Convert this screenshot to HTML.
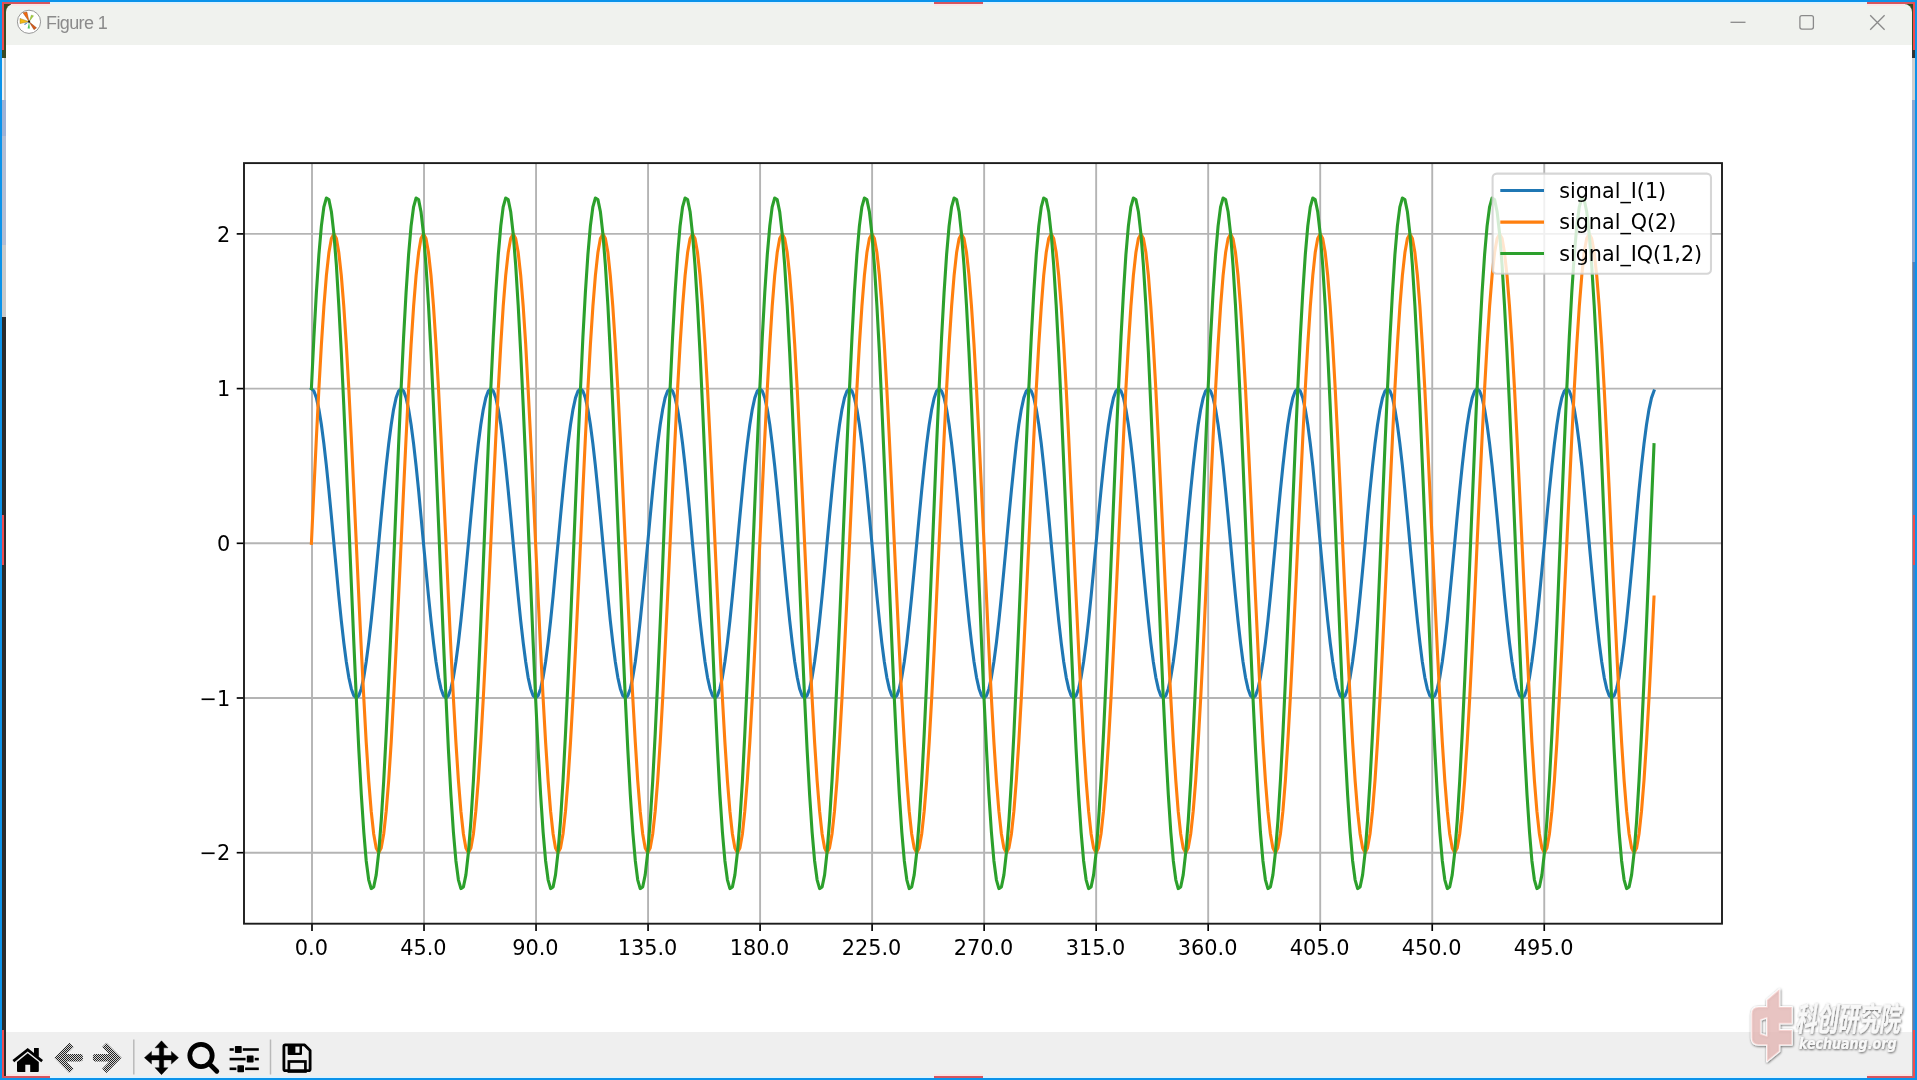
<!DOCTYPE html>
<html lang="en">
<head>
<meta charset="utf-8">
<title>Figure 1</title>
<style>
html,body{margin:0;padding:0;}
body{width:1917px;height:1080px;overflow:hidden;position:relative;background:#0b93ea;font-family:"Liberation Sans","Noto Sans CJK SC",sans-serif;}
.abs{position:absolute;}
#ring{left:2px;top:2px;width:1913px;height:1076px;background:#dff2fd;}
#win{left:6px;top:4px;width:1906px;height:1072px;background:#fff;}
#titlebar{left:6px;top:4px;width:1906px;height:41px;background:#f0f2ee;border-radius:8px 8px 0 0;}
#title{left:46px;top:13px;will-change:transform;font-size:18px;line-height:21px;color:#8b8b8b;letter-spacing:-0.62px;white-space:nowrap;}
#toolbar{left:6px;top:1032px;width:1906px;height:44px;background:#efefef;}
.red{background:#d6555f;}
</style>
</head>
<body>
<div id="ring" class="abs"></div>
<!-- left strip -->
<div class="abs" style="left:2px;top:4px;width:4px;height:1072px;background:#2b2b2b"></div>
<div class="abs" style="left:2px;top:4px;width:10px;height:54px;background:#3b4a22"></div>
<div class="abs" style="left:2px;top:58px;width:2px;height:42px;background:#f2f2f2"></div>
<div class="abs" style="left:4px;top:58px;width:2px;height:42px;background:#c4c4c4"></div>
<div class="abs" style="left:2px;top:100px;width:4px;height:36px;background:#9fb2d6"></div>
<div class="abs" style="left:2px;top:136px;width:4px;height:109px;background:#b3bdd3"></div>
<div class="abs" style="left:2px;top:245px;width:4px;height:72px;background:#cacaca"></div>
<!-- right strip -->
<div class="abs" style="left:1912px;top:4px;width:3px;height:1072px;background:#4c7fc4"></div>
<div class="abs" style="left:1912px;top:4px;width:1px;height:1072px;background:#8f959c"></div>
<div class="abs" style="left:1902px;top:4px;width:13px;height:52px;background:#3b4a22"></div>
<div class="abs" style="left:1912px;top:50px;width:3px;height:8px;background:#333"></div>
<div class="abs" style="left:1912px;top:58px;width:3px;height:42px;background:#cfcfcf"></div>
<div class="abs" style="left:1912px;top:100px;width:3px;height:162px;background:#8fa6cf"></div>
<!-- window -->
<div id="win" class="abs" style="top:44px;height:1032px"></div>
<div id="titlebar" class="abs"></div>
<!-- red snip marks -->
<div class="abs red" style="left:2px;top:2px;width:48px;height:2px"></div>
<div class="abs red" style="left:2px;top:2px;width:2px;height:48px;background:#f04a50"></div>
<div class="abs" style="left:11px;top:4px;width:39px;height:2px;background:#fbe6e5"></div>
<div class="abs red" style="left:934px;top:2px;width:49px;height:2px"></div>
<div class="abs" style="left:934px;top:4px;width:49px;height:2px;background:#fbe6e5"></div>
<div class="abs" style="left:1867px;top:4px;width:38px;height:2px;background:#fbe6e5"></div>
<div class="abs red" style="left:1867px;top:2px;width:48px;height:2px"></div>
<div class="abs red" style="left:1913px;top:2px;width:2px;height:48px;background:#f04a50"></div>
<div class="abs red" style="left:2px;top:515px;width:2px;height:50px;background:#f04a50"></div>
<div class="abs red" style="left:1913px;top:515px;width:2px;height:50px;background:#f04a50"></div>
<div class="abs red" style="left:2px;top:1030px;width:2px;height:48px;background:#f04a50"></div>
<div class="abs red" style="left:2px;top:1076px;width:48px;height:2px"></div>
<div class="abs red" style="left:934px;top:1076px;width:49px;height:2px"></div>
<div class="abs red" style="left:1913px;top:1030px;width:2px;height:48px;background:#f04a50"></div>
<div class="abs red" style="left:1867px;top:1076px;width:48px;height:2px"></div>

<div class="abs" style="left:6px;top:1074px;width:44px;height:2px;background:#fbe3e3;z-index:5"></div>
<div class="abs" style="left:934px;top:1074px;width:49px;height:2px;background:#fbe3e3;z-index:5"></div>
<div class="abs" style="left:1867px;top:1074px;width:45px;height:2px;background:#fbe3e3;z-index:5"></div>
<!-- title bar contents -->
<svg class="abs" style="left:14px;top:7px" width="30" height="30" viewBox="14 7 30 30">
<circle cx="29" cy="21.8" r="11.6" fill="#fff" stroke="#8c8c8c" stroke-width="0.9"/>
<polygon points="29.1,21.7 23,12.8 26.9,12" fill="#f4690f" stroke="#7a3a10" stroke-width="0.4"/>
<polygon points="29.1,21.7 20,18.4 20,23.6" fill="#f5b916" stroke="#8a6a10" stroke-width="0.4"/>
<polygon points="29.1,21.7 31.4,15 33.6,15.8" fill="#a6d23c" stroke="#6a8a30" stroke-width="0.3"/>
<polygon points="29.1,21.7 34,29.7 36.5,27.8" fill="#d9591b" stroke="#7a3a10" stroke-width="0.4"/>
<polygon points="29.1,21.7 27.6,28.4 29.9,28.4" fill="#4dc65c"/>
<polygon points="29.1,21.7 24.2,24 24.8,25" fill="#2a72b8"/>
<circle cx="29.1" cy="21.7" r="1.1" fill="#222"/>
</svg>
<div id="title" class="abs">Figure 1</div>
<svg class="abs" style="left:1720px;top:4px" width="192" height="40" viewBox="1720 4 192 40" fill="none" stroke="#8a8a8a" stroke-width="1.3">
<line x1="1730.5" y1="22.3" x2="1745.5" y2="22.3"/>
<rect x="1799.9" y="15.6" width="13.5" height="13.5" rx="2" ry="2"/>
<path d="M1870.2 15.3 L1884.6 29.7 M1884.6 15.3 L1870.2 29.7"/>
</svg>

<svg id="plot" width="1906" height="987" viewBox="6 45 1906 987" style="position:absolute;left:6px;top:45px;will-change:transform">
<rect x="6" y="45" width="1906" height="987" fill="#fff"/>
<g stroke="#b4b4b4" stroke-width="1.9"><line x1="312.00" y1="163.1" x2="312.00" y2="923.7"/><line x1="424.02" y1="163.1" x2="424.02" y2="923.7"/><line x1="536.05" y1="163.1" x2="536.05" y2="923.7"/><line x1="648.07" y1="163.1" x2="648.07" y2="923.7"/><line x1="760.09" y1="163.1" x2="760.09" y2="923.7"/><line x1="872.11" y1="163.1" x2="872.11" y2="923.7"/><line x1="984.14" y1="163.1" x2="984.14" y2="923.7"/><line x1="1096.16" y1="163.1" x2="1096.16" y2="923.7"/><line x1="1208.18" y1="163.1" x2="1208.18" y2="923.7"/><line x1="1320.20" y1="163.1" x2="1320.20" y2="923.7"/><line x1="1432.23" y1="163.1" x2="1432.23" y2="923.7"/><line x1="1544.25" y1="163.1" x2="1544.25" y2="923.7"/><line x1="244.0" y1="852.70" x2="1722.0" y2="852.70"/><line x1="244.0" y1="698.00" x2="1722.0" y2="698.00"/><line x1="244.0" y1="543.30" x2="1722.0" y2="543.30"/><line x1="244.0" y1="388.60" x2="1722.0" y2="388.60"/><line x1="244.0" y1="233.90" x2="1722.0" y2="233.90"/></g>
<polyline points="311.4,388.6 313.9,391.0 316.4,397.9 318.9,409.3 321.4,424.8 323.9,443.9 326.4,465.9 328.9,490.4 331.4,516.4 333.9,543.3 336.4,570.2 338.8,596.2 341.3,620.6 343.8,642.7 346.3,661.8 348.8,677.3 351.3,688.7 353.8,695.6 356.3,698.0 358.8,695.6 361.3,688.7 363.8,677.3 366.2,661.8 368.7,642.7 371.2,620.6 373.7,596.2 376.2,570.2 378.7,543.3 381.2,516.4 383.7,490.4 386.2,465.9 388.7,443.9 391.2,424.8 393.6,409.3 396.1,397.9 398.6,391.0 401.1,388.6 403.6,391.0 406.1,397.9 408.6,409.3 411.1,424.8 413.6,443.9 416.1,465.9 418.6,490.4 421.0,516.4 423.5,543.3 426.0,570.2 428.5,596.2 431.0,620.6 433.5,642.7 436.0,661.8 438.5,677.3 441.0,688.7 443.5,695.6 446.0,698.0 448.4,695.6 450.9,688.7 453.4,677.3 455.9,661.8 458.4,642.7 460.9,620.6 463.4,596.2 465.9,570.2 468.4,543.3 470.9,516.4 473.4,490.4 475.8,466.0 478.3,443.9 480.8,424.8 483.3,409.3 485.8,397.9 488.3,391.0 490.8,388.6 493.3,391.0 495.8,397.9 498.3,409.3 500.8,424.8 503.2,443.9 505.7,465.9 508.2,490.4 510.7,516.4 513.2,543.3 515.7,570.2 518.2,596.2 520.7,620.6 523.2,642.7 525.7,661.8 528.1,677.3 530.6,688.7 533.1,695.6 535.6,698.0 538.1,695.6 540.6,688.7 543.1,677.3 545.6,661.8 548.1,642.7 550.6,620.7 553.1,596.2 555.5,570.2 558.0,543.3 560.5,516.4 563.0,490.4 565.5,465.9 568.0,443.9 570.5,424.8 573.0,409.3 575.5,397.9 578.0,391.0 580.5,388.6 582.9,391.0 585.4,397.9 587.9,409.3 590.4,424.8 592.9,443.9 595.4,465.9 597.9,490.4 600.4,516.4 602.9,543.3 605.4,570.2 607.9,596.2 610.3,620.6 612.8,642.7 615.3,661.8 617.8,677.3 620.3,688.7 622.8,695.6 625.3,698.0 627.8,695.6 630.3,688.7 632.8,677.3 635.3,661.8 637.7,642.7 640.2,620.7 642.7,596.2 645.2,570.2 647.7,543.3 650.2,516.4 652.7,490.4 655.2,465.9 657.7,443.9 660.2,424.8 662.7,409.3 665.1,397.9 667.6,391.0 670.1,388.6 672.6,391.0 675.1,397.9 677.6,409.3 680.1,424.8 682.6,443.9 685.1,465.9 687.6,490.4 690.1,516.4 692.5,543.3 695.0,570.2 697.5,596.2 700.0,620.6 702.5,642.7 705.0,661.8 707.5,677.3 710.0,688.7 712.5,695.6 715.0,698.0 717.5,695.6 719.9,688.7 722.4,677.3 724.9,661.8 727.4,642.7 729.9,620.7 732.4,596.2 734.9,570.2 737.4,543.3 739.9,516.4 742.4,490.4 744.8,465.9 747.3,443.9 749.8,424.8 752.3,409.3 754.8,397.9 757.3,391.0 759.8,388.6 762.3,391.0 764.8,397.9 767.3,409.3 769.8,424.8 772.2,443.9 774.7,465.9 777.2,490.4 779.7,516.4 782.2,543.3 784.7,570.2 787.2,596.2 789.7,620.6 792.2,642.7 794.7,661.8 797.2,677.3 799.6,688.7 802.1,695.6 804.6,698.0 807.1,695.6 809.6,688.7 812.1,677.3 814.6,661.8 817.1,642.7 819.6,620.6 822.1,596.2 824.6,570.2 827.0,543.3 829.5,516.4 832.0,490.4 834.5,465.9 837.0,443.9 839.5,424.8 842.0,409.3 844.5,397.9 847.0,391.0 849.5,388.6 852.0,391.0 854.4,397.9 856.9,409.3 859.4,424.8 861.9,443.9 864.4,465.9 866.9,490.4 869.4,516.4 871.9,543.3 874.4,570.2 876.9,596.2 879.4,620.6 881.8,642.7 884.3,661.8 886.8,677.3 889.3,688.7 891.8,695.6 894.3,698.0 896.8,695.6 899.3,688.7 901.8,677.3 904.3,661.8 906.8,642.7 909.2,620.6 911.7,596.2 914.2,570.2 916.7,543.3 919.2,516.4 921.7,490.4 924.2,466.0 926.7,443.9 929.2,424.8 931.7,409.3 934.2,397.9 936.6,391.0 939.1,388.6 941.6,391.0 944.1,397.9 946.6,409.3 949.1,424.8 951.6,443.9 954.1,465.9 956.6,490.4 959.1,516.4 961.5,543.3 964.0,570.2 966.5,596.2 969.0,620.6 971.5,642.7 974.0,661.8 976.5,677.3 979.0,688.7 981.5,695.6 984.0,698.0 986.5,695.6 988.9,688.7 991.4,677.3 993.9,661.8 996.4,642.7 998.9,620.6 1001.4,596.2 1003.9,570.2 1006.4,543.3 1008.9,516.4 1011.4,490.4 1013.9,466.0 1016.3,443.9 1018.8,424.8 1021.3,409.3 1023.8,397.9 1026.3,391.0 1028.8,388.6 1031.3,391.0 1033.8,397.9 1036.3,409.3 1038.8,424.8 1041.3,443.9 1043.7,465.9 1046.2,490.4 1048.7,516.4 1051.2,543.3 1053.7,570.2 1056.2,596.2 1058.7,620.6 1061.2,642.7 1063.7,661.8 1066.2,677.3 1068.7,688.7 1071.1,695.6 1073.6,698.0 1076.1,695.6 1078.6,688.7 1081.1,677.3 1083.6,661.8 1086.1,642.7 1088.6,620.6 1091.1,596.2 1093.6,570.2 1096.1,543.3 1098.5,516.4 1101.0,490.4 1103.5,466.0 1106.0,443.9 1108.5,424.8 1111.0,409.3 1113.5,397.9 1116.0,391.0 1118.5,388.6 1121.0,391.0 1123.5,397.9 1125.9,409.3 1128.4,424.8 1130.9,443.9 1133.4,465.9 1135.9,490.4 1138.4,516.4 1140.9,543.3 1143.4,570.2 1145.9,596.2 1148.4,620.6 1150.8,642.7 1153.3,661.8 1155.8,677.3 1158.3,688.7 1160.8,695.6 1163.3,698.0 1165.8,695.6 1168.3,688.7 1170.8,677.3 1173.3,661.8 1175.8,642.7 1178.2,620.6 1180.7,596.2 1183.2,570.2 1185.7,543.3 1188.2,516.4 1190.7,490.4 1193.2,466.0 1195.7,443.9 1198.2,424.8 1200.7,409.3 1203.2,397.9 1205.6,391.0 1208.1,388.6 1210.6,391.0 1213.1,397.9 1215.6,409.3 1218.1,424.8 1220.6,443.9 1223.1,465.9 1225.6,490.4 1228.1,516.4 1230.6,543.3 1233.0,570.2 1235.5,596.2 1238.0,620.6 1240.5,642.7 1243.0,661.8 1245.5,677.3 1248.0,688.7 1250.5,695.6 1253.0,698.0 1255.5,695.6 1258.0,688.7 1260.4,677.3 1262.9,661.8 1265.4,642.7 1267.9,620.7 1270.4,596.2 1272.9,570.2 1275.4,543.3 1277.9,516.4 1280.4,490.4 1282.9,466.0 1285.4,443.9 1287.8,424.8 1290.3,409.3 1292.8,397.9 1295.3,391.0 1297.8,388.6 1300.3,391.0 1302.8,397.9 1305.3,409.3 1307.8,424.8 1310.3,443.9 1312.8,465.9 1315.2,490.4 1317.7,516.4 1320.2,543.3 1322.7,570.2 1325.2,596.2 1327.7,620.7 1330.2,642.7 1332.7,661.8 1335.2,677.3 1337.7,688.7 1340.2,695.6 1342.6,698.0 1345.1,695.6 1347.6,688.7 1350.1,677.3 1352.6,661.8 1355.1,642.7 1357.6,620.6 1360.1,596.2 1362.6,570.2 1365.1,543.3 1367.5,516.4 1370.0,490.4 1372.5,466.0 1375.0,443.9 1377.5,424.8 1380.0,409.3 1382.5,397.9 1385.0,391.0 1387.5,388.6 1390.0,391.0 1392.5,397.9 1394.9,409.3 1397.4,424.8 1399.9,443.9 1402.4,465.9 1404.9,490.4 1407.4,516.4 1409.9,543.3 1412.4,570.2 1414.9,596.2 1417.4,620.6 1419.9,642.7 1422.3,661.8 1424.8,677.3 1427.3,688.7 1429.8,695.6 1432.3,698.0 1434.8,695.6 1437.3,688.7 1439.8,677.3 1442.3,661.8 1444.8,642.7 1447.3,620.7 1449.7,596.2 1452.2,570.2 1454.7,543.3 1457.2,516.4 1459.7,490.4 1462.2,466.0 1464.7,443.9 1467.2,424.8 1469.7,409.3 1472.2,397.9 1474.7,391.0 1477.1,388.6 1479.6,391.0 1482.1,397.9 1484.6,409.3 1487.1,424.8 1489.6,443.9 1492.1,465.9 1494.6,490.4 1497.1,516.4 1499.6,543.3 1502.1,570.2 1504.5,596.2 1507.0,620.7 1509.5,642.7 1512.0,661.8 1514.5,677.3 1517.0,688.7 1519.5,695.6 1522.0,698.0 1524.5,695.6 1527.0,688.7 1529.5,677.3 1531.9,661.8 1534.4,642.7 1536.9,620.7 1539.4,596.2 1541.9,570.2 1544.4,543.3 1546.9,516.4 1549.4,490.4 1551.9,466.0 1554.4,443.9 1556.9,424.8 1559.3,409.3 1561.8,397.9 1564.3,391.0 1566.8,388.6 1569.3,391.0 1571.8,397.9 1574.3,409.3 1576.8,424.8 1579.3,443.9 1581.8,465.9 1584.2,490.4 1586.7,516.4 1589.2,543.3 1591.7,570.2 1594.2,596.2 1596.7,620.6 1599.2,642.7 1601.7,661.8 1604.2,677.3 1606.7,688.7 1609.2,695.6 1611.6,698.0 1614.1,695.6 1616.6,688.7 1619.1,677.3 1621.6,661.8 1624.1,642.7 1626.6,620.7 1629.1,596.2 1631.6,570.2 1634.1,543.3 1636.6,516.4 1639.0,490.4 1641.5,466.0 1644.0,443.9 1646.5,424.8 1649.0,409.3 1651.5,397.9 1654.0,391.0" fill="none" stroke="#1f77b4" stroke-width="3.1" stroke-linejoin="round" stroke-linecap="square"/>
<polyline points="311.4,543.3 313.9,489.6 316.4,437.5 318.9,388.6 321.4,344.4 323.9,306.3 326.4,275.4 328.9,252.6 331.4,238.6 333.9,233.9 336.4,238.6 338.8,252.6 341.3,275.4 343.8,306.3 346.3,344.4 348.8,388.6 351.3,437.5 353.8,489.6 356.3,543.3 358.8,597.0 361.3,649.1 363.8,698.0 366.2,742.2 368.7,780.3 371.2,811.2 373.7,834.0 376.2,848.0 378.7,852.7 381.2,848.0 383.7,834.0 386.2,811.2 388.7,780.3 391.2,742.2 393.6,698.0 396.1,649.1 398.6,597.0 401.1,543.3 403.6,489.6 406.1,437.5 408.6,388.6 411.1,344.4 413.6,306.3 416.1,275.4 418.6,252.6 421.0,238.6 423.5,233.9 426.0,238.6 428.5,252.6 431.0,275.4 433.5,306.3 436.0,344.4 438.5,388.6 441.0,437.5 443.5,489.6 446.0,543.3 448.4,597.0 450.9,649.1 453.4,698.0 455.9,742.2 458.4,780.3 460.9,811.2 463.4,834.0 465.9,848.0 468.4,852.7 470.9,848.0 473.4,834.0 475.8,811.2 478.3,780.3 480.8,742.2 483.3,698.0 485.8,649.1 488.3,597.0 490.8,543.3 493.3,489.6 495.8,437.5 498.3,388.6 500.8,344.4 503.2,306.3 505.7,275.4 508.2,252.6 510.7,238.6 513.2,233.9 515.7,238.6 518.2,252.6 520.7,275.4 523.2,306.3 525.7,344.4 528.1,388.6 530.6,437.5 533.1,489.6 535.6,543.3 538.1,597.0 540.6,649.1 543.1,698.0 545.6,742.2 548.1,780.3 550.6,811.2 553.1,834.0 555.5,848.0 558.0,852.7 560.5,848.0 563.0,834.0 565.5,811.2 568.0,780.3 570.5,742.2 573.0,698.0 575.5,649.1 578.0,597.0 580.5,543.3 582.9,489.6 585.4,437.5 587.9,388.6 590.4,344.4 592.9,306.3 595.4,275.4 597.9,252.6 600.4,238.6 602.9,233.9 605.4,238.6 607.9,252.6 610.3,275.4 612.8,306.3 615.3,344.4 617.8,388.6 620.3,437.5 622.8,489.6 625.3,543.3 627.8,597.0 630.3,649.1 632.8,698.0 635.3,742.2 637.7,780.3 640.2,811.2 642.7,834.0 645.2,848.0 647.7,852.7 650.2,848.0 652.7,834.0 655.2,811.2 657.7,780.3 660.2,742.2 662.7,698.0 665.1,649.1 667.6,597.0 670.1,543.3 672.6,489.6 675.1,437.5 677.6,388.6 680.1,344.4 682.6,306.3 685.1,275.4 687.6,252.6 690.1,238.6 692.5,233.9 695.0,238.6 697.5,252.6 700.0,275.4 702.5,306.3 705.0,344.4 707.5,388.6 710.0,437.5 712.5,489.6 715.0,543.3 717.5,597.0 719.9,649.1 722.4,698.0 724.9,742.2 727.4,780.3 729.9,811.2 732.4,834.0 734.9,848.0 737.4,852.7 739.9,848.0 742.4,834.0 744.8,811.2 747.3,780.3 749.8,742.2 752.3,698.0 754.8,649.1 757.3,597.0 759.8,543.3 762.3,489.6 764.8,437.5 767.3,388.6 769.8,344.4 772.2,306.3 774.7,275.4 777.2,252.6 779.7,238.6 782.2,233.9 784.7,238.6 787.2,252.6 789.7,275.4 792.2,306.3 794.7,344.4 797.2,388.6 799.6,437.5 802.1,489.6 804.6,543.3 807.1,597.0 809.6,649.1 812.1,698.0 814.6,742.2 817.1,780.3 819.6,811.2 822.1,834.0 824.6,848.0 827.0,852.7 829.5,848.0 832.0,834.0 834.5,811.2 837.0,780.3 839.5,742.2 842.0,698.0 844.5,649.1 847.0,597.0 849.5,543.3 852.0,489.6 854.4,437.5 856.9,388.6 859.4,344.4 861.9,306.3 864.4,275.4 866.9,252.6 869.4,238.6 871.9,233.9 874.4,238.6 876.9,252.6 879.4,275.4 881.8,306.3 884.3,344.4 886.8,388.6 889.3,437.5 891.8,489.6 894.3,543.3 896.8,597.0 899.3,649.1 901.8,698.0 904.3,742.2 906.8,780.3 909.2,811.2 911.7,834.0 914.2,848.0 916.7,852.7 919.2,848.0 921.7,834.0 924.2,811.2 926.7,780.3 929.2,742.2 931.7,698.0 934.2,649.1 936.6,597.0 939.1,543.3 941.6,489.6 944.1,437.5 946.6,388.6 949.1,344.4 951.6,306.3 954.1,275.4 956.6,252.6 959.1,238.6 961.5,233.9 964.0,238.6 966.5,252.6 969.0,275.4 971.5,306.3 974.0,344.4 976.5,388.6 979.0,437.5 981.5,489.6 984.0,543.3 986.5,597.0 988.9,649.1 991.4,698.0 993.9,742.2 996.4,780.3 998.9,811.2 1001.4,834.0 1003.9,848.0 1006.4,852.7 1008.9,848.0 1011.4,834.0 1013.9,811.2 1016.3,780.3 1018.8,742.2 1021.3,698.0 1023.8,649.1 1026.3,597.0 1028.8,543.3 1031.3,489.6 1033.8,437.5 1036.3,388.6 1038.8,344.4 1041.3,306.3 1043.7,275.4 1046.2,252.6 1048.7,238.6 1051.2,233.9 1053.7,238.6 1056.2,252.6 1058.7,275.4 1061.2,306.3 1063.7,344.4 1066.2,388.6 1068.7,437.5 1071.1,489.6 1073.6,543.3 1076.1,597.0 1078.6,649.1 1081.1,698.0 1083.6,742.2 1086.1,780.3 1088.6,811.2 1091.1,834.0 1093.6,848.0 1096.1,852.7 1098.5,848.0 1101.0,834.0 1103.5,811.2 1106.0,780.3 1108.5,742.2 1111.0,698.0 1113.5,649.1 1116.0,597.0 1118.5,543.3 1121.0,489.6 1123.5,437.5 1125.9,388.6 1128.4,344.4 1130.9,306.3 1133.4,275.4 1135.9,252.6 1138.4,238.6 1140.9,233.9 1143.4,238.6 1145.9,252.6 1148.4,275.4 1150.8,306.3 1153.3,344.4 1155.8,388.6 1158.3,437.5 1160.8,489.6 1163.3,543.3 1165.8,597.0 1168.3,649.1 1170.8,698.0 1173.3,742.2 1175.8,780.3 1178.2,811.2 1180.7,834.0 1183.2,848.0 1185.7,852.7 1188.2,848.0 1190.7,834.0 1193.2,811.2 1195.7,780.3 1198.2,742.2 1200.7,698.0 1203.2,649.1 1205.6,597.0 1208.1,543.3 1210.6,489.6 1213.1,437.5 1215.6,388.6 1218.1,344.4 1220.6,306.3 1223.1,275.4 1225.6,252.6 1228.1,238.6 1230.6,233.9 1233.0,238.6 1235.5,252.6 1238.0,275.4 1240.5,306.3 1243.0,344.4 1245.5,388.6 1248.0,437.5 1250.5,489.6 1253.0,543.3 1255.5,597.0 1258.0,649.1 1260.4,698.0 1262.9,742.2 1265.4,780.3 1267.9,811.2 1270.4,834.0 1272.9,848.0 1275.4,852.7 1277.9,848.0 1280.4,834.0 1282.9,811.2 1285.4,780.3 1287.8,742.2 1290.3,698.0 1292.8,649.1 1295.3,597.0 1297.8,543.3 1300.3,489.6 1302.8,437.5 1305.3,388.6 1307.8,344.4 1310.3,306.3 1312.8,275.4 1315.2,252.6 1317.7,238.6 1320.2,233.9 1322.7,238.6 1325.2,252.6 1327.7,275.4 1330.2,306.3 1332.7,344.4 1335.2,388.6 1337.7,437.5 1340.2,489.6 1342.6,543.3 1345.1,597.0 1347.6,649.1 1350.1,698.0 1352.6,742.2 1355.1,780.3 1357.6,811.2 1360.1,834.0 1362.6,848.0 1365.1,852.7 1367.5,848.0 1370.0,834.0 1372.5,811.2 1375.0,780.3 1377.5,742.2 1380.0,698.0 1382.5,649.1 1385.0,597.0 1387.5,543.3 1390.0,489.6 1392.5,437.5 1394.9,388.6 1397.4,344.4 1399.9,306.3 1402.4,275.4 1404.9,252.6 1407.4,238.6 1409.9,233.9 1412.4,238.6 1414.9,252.6 1417.4,275.4 1419.9,306.3 1422.3,344.4 1424.8,388.6 1427.3,437.5 1429.8,489.6 1432.3,543.3 1434.8,597.0 1437.3,649.1 1439.8,698.0 1442.3,742.2 1444.8,780.3 1447.3,811.2 1449.7,834.0 1452.2,848.0 1454.7,852.7 1457.2,848.0 1459.7,834.0 1462.2,811.2 1464.7,780.3 1467.2,742.2 1469.7,698.0 1472.2,649.1 1474.7,597.0 1477.1,543.3 1479.6,489.6 1482.1,437.5 1484.6,388.6 1487.1,344.4 1489.6,306.3 1492.1,275.4 1494.6,252.6 1497.1,238.6 1499.6,233.9 1502.1,238.6 1504.5,252.6 1507.0,275.4 1509.5,306.3 1512.0,344.4 1514.5,388.6 1517.0,437.5 1519.5,489.6 1522.0,543.3 1524.5,597.0 1527.0,649.1 1529.5,698.0 1531.9,742.2 1534.4,780.3 1536.9,811.2 1539.4,834.0 1541.9,848.0 1544.4,852.7 1546.9,848.0 1549.4,834.0 1551.9,811.2 1554.4,780.3 1556.9,742.2 1559.3,698.0 1561.8,649.1 1564.3,597.0 1566.8,543.3 1569.3,489.6 1571.8,437.5 1574.3,388.6 1576.8,344.4 1579.3,306.3 1581.8,275.4 1584.2,252.6 1586.7,238.6 1589.2,233.9 1591.7,238.6 1594.2,252.6 1596.7,275.4 1599.2,306.3 1601.7,344.4 1604.2,388.6 1606.7,437.5 1609.2,489.6 1611.6,543.3 1614.1,597.0 1616.6,649.1 1619.1,698.0 1621.6,742.2 1624.1,780.3 1626.6,811.2 1629.1,834.0 1631.6,848.0 1634.1,852.7 1636.6,848.0 1639.0,834.0 1641.5,811.2 1644.0,780.3 1646.5,742.2 1649.0,698.0 1651.5,649.1 1654.0,597.0" fill="none" stroke="#ff7f0e" stroke-width="3.1" stroke-linejoin="round" stroke-linecap="square"/>
<polyline points="311.4,388.6 313.9,337.2 316.4,292.1 318.9,254.6 321.4,225.9 323.9,206.8 326.4,198.0 328.9,199.6 331.4,211.7 333.9,233.9 336.4,265.5 338.8,305.5 341.3,352.7 343.8,405.7 346.3,462.9 348.8,522.6 351.3,582.8 353.8,641.9 356.3,698.0 358.8,749.4 361.3,794.5 363.8,832.0 366.2,860.7 368.7,879.8 371.2,888.6 373.7,887.0 376.2,874.9 378.7,852.7 381.2,821.1 383.7,781.1 386.2,733.9 388.7,680.9 391.2,623.7 393.6,564.0 396.1,503.8 398.6,444.7 401.1,388.6 403.6,337.2 406.1,292.1 408.6,254.6 411.1,225.9 413.6,206.8 416.1,198.0 418.6,199.6 421.0,211.7 423.5,233.9 426.0,265.5 428.5,305.5 431.0,352.7 433.5,405.7 436.0,462.9 438.5,522.6 441.0,582.8 443.5,641.9 446.0,698.0 448.4,749.4 450.9,794.5 453.4,832.0 455.9,860.7 458.4,879.8 460.9,888.6 463.4,887.0 465.9,874.9 468.4,852.7 470.9,821.1 473.4,781.1 475.8,733.9 478.3,680.9 480.8,623.7 483.3,564.0 485.8,503.8 488.3,444.7 490.8,388.6 493.3,337.2 495.8,292.1 498.3,254.6 500.8,225.9 503.2,206.8 505.7,198.0 508.2,199.6 510.7,211.7 513.2,233.9 515.7,265.5 518.2,305.5 520.7,352.7 523.2,405.7 525.7,462.9 528.1,522.6 530.6,582.8 533.1,641.9 535.6,698.0 538.1,749.4 540.6,794.5 543.1,832.0 545.6,860.7 548.1,879.8 550.6,888.6 553.1,887.0 555.5,874.9 558.0,852.7 560.5,821.1 563.0,781.1 565.5,733.9 568.0,680.9 570.5,623.7 573.0,564.0 575.5,503.8 578.0,444.7 580.5,388.6 582.9,337.2 585.4,292.1 587.9,254.6 590.4,225.9 592.9,206.8 595.4,198.0 597.9,199.6 600.4,211.7 602.9,233.9 605.4,265.5 607.9,305.5 610.3,352.7 612.8,405.7 615.3,462.9 617.8,522.6 620.3,582.8 622.8,641.9 625.3,698.0 627.8,749.4 630.3,794.5 632.8,832.0 635.3,860.7 637.7,879.8 640.2,888.6 642.7,887.0 645.2,874.9 647.7,852.7 650.2,821.1 652.7,781.1 655.2,733.9 657.7,680.9 660.2,623.7 662.7,564.0 665.1,503.8 667.6,444.7 670.1,388.6 672.6,337.2 675.1,292.1 677.6,254.6 680.1,225.9 682.6,206.8 685.1,198.0 687.6,199.6 690.1,211.7 692.5,233.9 695.0,265.5 697.5,305.5 700.0,352.7 702.5,405.7 705.0,462.9 707.5,522.6 710.0,582.8 712.5,641.9 715.0,698.0 717.5,749.4 719.9,794.5 722.4,832.0 724.9,860.7 727.4,879.8 729.9,888.6 732.4,887.0 734.9,874.9 737.4,852.7 739.9,821.1 742.4,781.1 744.8,733.9 747.3,680.9 749.8,623.7 752.3,564.0 754.8,503.8 757.3,444.7 759.8,388.6 762.3,337.2 764.8,292.1 767.3,254.6 769.8,225.9 772.2,206.8 774.7,198.0 777.2,199.6 779.7,211.7 782.2,233.9 784.7,265.5 787.2,305.5 789.7,352.7 792.2,405.7 794.7,462.9 797.2,522.6 799.6,582.8 802.1,641.9 804.6,698.0 807.1,749.4 809.6,794.5 812.1,832.0 814.6,860.7 817.1,879.8 819.6,888.6 822.1,887.0 824.6,874.9 827.0,852.7 829.5,821.1 832.0,781.1 834.5,733.9 837.0,680.9 839.5,623.7 842.0,564.0 844.5,503.8 847.0,444.7 849.5,388.6 852.0,337.2 854.4,292.1 856.9,254.6 859.4,225.9 861.9,206.8 864.4,198.0 866.9,199.6 869.4,211.7 871.9,233.9 874.4,265.5 876.9,305.5 879.4,352.7 881.8,405.7 884.3,462.9 886.8,522.6 889.3,582.8 891.8,641.9 894.3,698.0 896.8,749.4 899.3,794.5 901.8,832.0 904.3,860.7 906.8,879.8 909.2,888.6 911.7,887.0 914.2,874.9 916.7,852.7 919.2,821.1 921.7,781.1 924.2,733.9 926.7,680.9 929.2,623.7 931.7,564.0 934.2,503.8 936.6,444.7 939.1,388.6 941.6,337.2 944.1,292.1 946.6,254.6 949.1,225.9 951.6,206.8 954.1,198.0 956.6,199.6 959.1,211.7 961.5,233.9 964.0,265.5 966.5,305.5 969.0,352.7 971.5,405.7 974.0,462.9 976.5,522.6 979.0,582.8 981.5,641.9 984.0,698.0 986.5,749.4 988.9,794.5 991.4,832.0 993.9,860.7 996.4,879.8 998.9,888.6 1001.4,887.0 1003.9,874.9 1006.4,852.7 1008.9,821.1 1011.4,781.1 1013.9,733.9 1016.3,680.9 1018.8,623.7 1021.3,564.0 1023.8,503.8 1026.3,444.7 1028.8,388.6 1031.3,337.2 1033.8,292.1 1036.3,254.6 1038.8,225.9 1041.3,206.8 1043.7,198.0 1046.2,199.6 1048.7,211.7 1051.2,233.9 1053.7,265.5 1056.2,305.5 1058.7,352.7 1061.2,405.7 1063.7,462.9 1066.2,522.6 1068.7,582.8 1071.1,641.9 1073.6,698.0 1076.1,749.4 1078.6,794.5 1081.1,832.0 1083.6,860.7 1086.1,879.8 1088.6,888.6 1091.1,887.0 1093.6,874.9 1096.1,852.7 1098.5,821.1 1101.0,781.1 1103.5,733.9 1106.0,680.9 1108.5,623.7 1111.0,564.0 1113.5,503.8 1116.0,444.7 1118.5,388.6 1121.0,337.2 1123.5,292.1 1125.9,254.6 1128.4,225.9 1130.9,206.8 1133.4,198.0 1135.9,199.6 1138.4,211.7 1140.9,233.9 1143.4,265.5 1145.9,305.5 1148.4,352.7 1150.8,405.7 1153.3,462.9 1155.8,522.6 1158.3,582.8 1160.8,641.9 1163.3,698.0 1165.8,749.4 1168.3,794.5 1170.8,832.0 1173.3,860.7 1175.8,879.8 1178.2,888.6 1180.7,887.0 1183.2,874.9 1185.7,852.7 1188.2,821.1 1190.7,781.1 1193.2,733.9 1195.7,680.9 1198.2,623.7 1200.7,564.0 1203.2,503.8 1205.6,444.7 1208.1,388.6 1210.6,337.2 1213.1,292.1 1215.6,254.6 1218.1,225.9 1220.6,206.8 1223.1,198.0 1225.6,199.6 1228.1,211.7 1230.6,233.9 1233.0,265.5 1235.5,305.5 1238.0,352.7 1240.5,405.7 1243.0,462.9 1245.5,522.6 1248.0,582.8 1250.5,641.9 1253.0,698.0 1255.5,749.4 1258.0,794.5 1260.4,832.0 1262.9,860.7 1265.4,879.8 1267.9,888.6 1270.4,887.0 1272.9,874.9 1275.4,852.7 1277.9,821.1 1280.4,781.1 1282.9,733.9 1285.4,680.9 1287.8,623.7 1290.3,564.0 1292.8,503.8 1295.3,444.7 1297.8,388.6 1300.3,337.2 1302.8,292.1 1305.3,254.6 1307.8,225.9 1310.3,206.8 1312.8,198.0 1315.2,199.6 1317.7,211.7 1320.2,233.9 1322.7,265.5 1325.2,305.5 1327.7,352.7 1330.2,405.7 1332.7,462.9 1335.2,522.6 1337.7,582.8 1340.2,641.9 1342.6,698.0 1345.1,749.4 1347.6,794.5 1350.1,832.0 1352.6,860.7 1355.1,879.8 1357.6,888.6 1360.1,887.0 1362.6,874.9 1365.1,852.7 1367.5,821.1 1370.0,781.1 1372.5,733.9 1375.0,680.9 1377.5,623.7 1380.0,564.0 1382.5,503.8 1385.0,444.7 1387.5,388.6 1390.0,337.2 1392.5,292.1 1394.9,254.6 1397.4,225.9 1399.9,206.8 1402.4,198.0 1404.9,199.6 1407.4,211.7 1409.9,233.9 1412.4,265.5 1414.9,305.5 1417.4,352.7 1419.9,405.7 1422.3,462.9 1424.8,522.6 1427.3,582.8 1429.8,641.9 1432.3,698.0 1434.8,749.4 1437.3,794.5 1439.8,832.0 1442.3,860.7 1444.8,879.8 1447.3,888.6 1449.7,887.0 1452.2,874.9 1454.7,852.7 1457.2,821.1 1459.7,781.1 1462.2,733.9 1464.7,680.9 1467.2,623.7 1469.7,564.0 1472.2,503.8 1474.7,444.7 1477.1,388.6 1479.6,337.2 1482.1,292.1 1484.6,254.6 1487.1,225.9 1489.6,206.8 1492.1,198.0 1494.6,199.6 1497.1,211.7 1499.6,233.9 1502.1,265.5 1504.5,305.5 1507.0,352.7 1509.5,405.7 1512.0,462.9 1514.5,522.6 1517.0,582.8 1519.5,641.9 1522.0,698.0 1524.5,749.4 1527.0,794.5 1529.5,832.0 1531.9,860.7 1534.4,879.8 1536.9,888.6 1539.4,887.0 1541.9,874.9 1544.4,852.7 1546.9,821.1 1549.4,781.1 1551.9,733.9 1554.4,680.9 1556.9,623.7 1559.3,564.0 1561.8,503.8 1564.3,444.7 1566.8,388.6 1569.3,337.2 1571.8,292.1 1574.3,254.6 1576.8,225.9 1579.3,206.8 1581.8,198.0 1584.2,199.6 1586.7,211.7 1589.2,233.9 1591.7,265.5 1594.2,305.5 1596.7,352.7 1599.2,405.7 1601.7,462.9 1604.2,522.6 1606.7,582.8 1609.2,641.9 1611.6,698.0 1614.1,749.4 1616.6,794.5 1619.1,832.0 1621.6,860.7 1624.1,879.8 1626.6,888.6 1629.1,887.0 1631.6,874.9 1634.1,852.7 1636.6,821.1 1639.0,781.1 1641.5,733.9 1644.0,680.9 1646.5,623.7 1649.0,564.0 1651.5,503.8 1654.0,444.7" fill="none" stroke="#2ca02c" stroke-width="3.1" stroke-linejoin="round" stroke-linecap="square"/>
<g stroke="#000" stroke-width="1.67"><line x1="312.00" y1="923.70" x2="312.00" y2="930.99"/><line x1="424.02" y1="923.70" x2="424.02" y2="930.99"/><line x1="536.05" y1="923.70" x2="536.05" y2="930.99"/><line x1="648.07" y1="923.70" x2="648.07" y2="930.99"/><line x1="760.09" y1="923.70" x2="760.09" y2="930.99"/><line x1="872.11" y1="923.70" x2="872.11" y2="930.99"/><line x1="984.14" y1="923.70" x2="984.14" y2="930.99"/><line x1="1096.16" y1="923.70" x2="1096.16" y2="930.99"/><line x1="1208.18" y1="923.70" x2="1208.18" y2="930.99"/><line x1="1320.20" y1="923.70" x2="1320.20" y2="930.99"/><line x1="1432.23" y1="923.70" x2="1432.23" y2="930.99"/><line x1="1544.25" y1="923.70" x2="1544.25" y2="930.99"/><line x1="236.71" y1="852.70" x2="244.00" y2="852.70"/><line x1="236.71" y1="698.00" x2="244.00" y2="698.00"/><line x1="236.71" y1="543.30" x2="244.00" y2="543.30"/><line x1="236.71" y1="388.60" x2="244.00" y2="388.60"/><line x1="236.71" y1="233.90" x2="244.00" y2="233.90"/></g>
<rect x="244.00" y="163.10" width="1478.00" height="760.60" fill="none" stroke="#1c1c1c" stroke-width="1.9"/>
<g font-family="'DejaVu Sans','Liberation Sans',sans-serif" font-size="20.83" fill="#000"><text x="311.40" y="954.6" text-anchor="middle">0.0</text><text x="423.42" y="954.6" text-anchor="middle">45.0</text><text x="535.45" y="954.6" text-anchor="middle">90.0</text><text x="647.47" y="954.6" text-anchor="middle">135.0</text><text x="759.49" y="954.6" text-anchor="middle">180.0</text><text x="871.51" y="954.6" text-anchor="middle">225.0</text><text x="983.54" y="954.6" text-anchor="middle">270.0</text><text x="1095.56" y="954.6" text-anchor="middle">315.0</text><text x="1207.58" y="954.6" text-anchor="middle">360.0</text><text x="1319.60" y="954.6" text-anchor="middle">405.0</text><text x="1431.63" y="954.6" text-anchor="middle">450.0</text><text x="1543.65" y="954.6" text-anchor="middle">495.0</text><text x="230.3" y="860.40" text-anchor="end">−2</text><text x="230.3" y="705.70" text-anchor="end">−1</text><text x="230.3" y="551.00" text-anchor="end">0</text><text x="230.3" y="396.30" text-anchor="end">1</text><text x="230.3" y="241.60" text-anchor="end">2</text></g>
<rect x="1492.6" y="173.6" width="218.4" height="100.2" rx="4.2" ry="4.2" fill="#fff" fill-opacity="0.8" stroke="#ccc" stroke-opacity="0.8" stroke-width="2.08"/>
<line x1="1500.3" y1="190.5" x2="1544" y2="190.5" stroke="#1f77b4" stroke-width="3.1"/>
<text x="1559.2" y="197.6" font-family="'DejaVu Sans','Liberation Sans',sans-serif" font-size="20.7" fill="#000">signal_I(1)</text>
<line x1="1500.3" y1="222.1" x2="1544" y2="222.1" stroke="#ff7f0e" stroke-width="3.1"/>
<text x="1559.2" y="229.0" font-family="'DejaVu Sans','Liberation Sans',sans-serif" font-size="20.7" fill="#000">signal_Q(2)</text>
<line x1="1500.3" y1="253.5" x2="1544" y2="253.5" stroke="#2ca02c" stroke-width="3.1"/>
<text x="1559.2" y="260.5" font-family="'DejaVu Sans','Liberation Sans',sans-serif" font-size="20.7" fill="#000">signal_IQ(1,2)</text>
</svg>

<!-- toolbar -->
<div id="toolbar" class="abs"></div>
<svg class="abs" style="left:6px;top:1032px" width="330" height="44" viewBox="6 1032 330 44">
<defs>
<pattern id="dith" width="2" height="2" patternUnits="userSpaceOnUse">
<rect x="0" y="0" width="1" height="1" fill="#222"/><rect x="1" y="1" width="1" height="1" fill="#222"/>
</pattern>
</defs>
<!-- home -->
<path d="M12.5 1060 L27.7 1048 L34 1053 L34 1048 L38.8 1048 L38.8 1056.8 L43 1060 L41.3 1062.2 L27.7 1051.4 L14.2 1062.2 Z" fill="#000"/>
<path d="M17 1062 L27.7 1053.3 L38.8 1062 L38.8 1071 Q38.8 1072 37.8 1072 L30.2 1072 L30.2 1064.7 L25.3 1064.7 L25.3 1072 L18 1072 Q17 1072 17 1071 Z" fill="#000"/>
<!-- back -->
<path d="M54.3 1057.8 L69.4 1042.7 L73.6 1046.9 L66.4 1054.1 L80.5 1054.1 Q82.9 1054.1 82.9 1056.5 L82.9 1059.1 Q82.9 1061.5 80.5 1061.5 L66.4 1061.5 L73.6 1068.7 L69.4 1072.9 Z" fill="#000" fill-opacity="0.1"/><path d="M54.3 1057.8 L69.4 1042.7 L73.6 1046.9 L66.4 1054.1 L80.5 1054.1 Q82.9 1054.1 82.9 1056.5 L82.9 1059.1 Q82.9 1061.5 80.5 1061.5 L66.4 1061.5 L73.6 1068.7 L69.4 1072.9 Z" fill="url(#dith)"/>
<!-- forward -->
<path d="M121.5 1057.8 L106.4 1042.7 L102.2 1046.9 L109.4 1054.1 L95.3 1054.1 Q92.9 1054.1 92.9 1056.5 L92.9 1059.1 Q92.9 1061.5 95.3 1061.5 L109.4 1061.5 L102.2 1068.7 L106.4 1072.9 Z" fill="#000" fill-opacity="0.1"/><path d="M121.5 1057.8 L106.4 1042.7 L102.2 1046.9 L109.4 1054.1 L95.3 1054.1 Q92.9 1054.1 92.9 1056.5 L92.9 1059.1 Q92.9 1061.5 95.3 1061.5 L109.4 1061.5 L102.2 1068.7 L106.4 1072.9 Z" fill="url(#dith)"/>
<line x1="133.8" y1="1039.5" x2="133.8" y2="1074.5" stroke="#b9b9b9" stroke-width="1.5"/>
<!-- pan -->
<path d="M161.5 1040.8 L168 1047.8 L163.7 1047.8 L163.7 1055.5 L171.4 1055.5 L171.4 1051.4 L178.5 1057.7 L171.4 1064 L171.4 1059.9 L163.7 1059.9 L163.7 1067.7 L168 1067.7 L161.5 1074.7 L155 1067.7 L159.3 1067.7 L159.3 1059.9 L151.5 1059.9 L151.5 1064 L144.4 1057.7 L151.5 1051.4 L151.5 1055.5 L159.3 1055.5 L159.3 1047.8 L155 1047.8 Z" fill="#000" stroke="#000" stroke-width="0.4" stroke-linejoin="round"/>
<!-- zoom -->
<circle cx="201" cy="1055.5" r="11.2" fill="none" stroke="#000" stroke-width="4.8"/>
<line x1="209.6" y1="1064.1" x2="216.8" y2="1071.2" stroke="#000" stroke-width="4.8" stroke-linecap="round"/>
<!-- sliders -->
<g fill="#000">
<rect x="229.6" y="1048.2" width="4.2" height="2.6"/><rect x="242.8" y="1048.2" width="16" height="2.6"/>
<rect x="234.9" y="1046" width="6.8" height="7" rx="0.8"/>
<rect x="229.6" y="1057.8" width="16" height="2.6"/><rect x="254.7" y="1057.8" width="4.1" height="2.6"/>
<rect x="246.8" y="1055.6" width="6.8" height="7" rx="0.8"/>
<rect x="229.6" y="1067.5" width="6.8" height="2.6"/><rect x="245.1" y="1067.5" width="13.7" height="2.6"/>
<rect x="237.4" y="1065.3" width="6.6" height="7" rx="0.8"/>
</g>
<line x1="270.5" y1="1039.5" x2="270.5" y2="1074.5" stroke="#b9b9b9" stroke-width="1.5"/>
<!-- save -->
<path d="M285.3 1044.9 L304.6 1044.9 L310.1 1050.4 L310.1 1069.2 Q310.1 1070.6 308.7 1070.6 L285.3 1070.6 Q283.9 1070.6 283.9 1069.2 L283.9 1046.3 Q283.9 1044.9 285.3 1044.9 Z" fill="none" stroke="#000" stroke-width="2.8" stroke-linejoin="round"/>
<path d="M287.7 1044 L302 1044 L302 1054 Q302 1055 301 1055 L288.7 1055 Q287.7 1055 287.7 1054 Z M295.4 1046.6 L299.5 1046.6 L299.5 1052.8 L295.4 1052.8 Z" fill="#000" fill-rule="evenodd"/>
<rect x="288.9" y="1061.5" width="16.5" height="10" fill="none" stroke="#000" stroke-width="2.7"/>
</svg>

<!-- watermark -->
<svg class="abs" style="left:1740px;top:980px;will-change:transform" width="172" height="96" viewBox="1740 980 172 96">
<defs>
<filter id="sh" x="-10%" y="-20%" width="120%" height="150%"><feDropShadow dx="0.5" dy="0.8" stdDeviation="1.05" flood-color="#000" flood-opacity="0.7"/></filter>
<path id="lg" d="M1779.4 989.3 L1779.4 1006.9 L1791.9 1006.9 L1791.9 1023.5 L1779.4 1023.5 L1779.4 1030 L1791.9 1030 L1791.9 1044.8 L1779.4 1044.8 L1779.4 1051.3 L1766.9 1061.5 L1766.9 1044.8 L1758.6 1044.8 Q1751.6 1044.8 1751.6 1037.8 L1751.6 1013.9 Q1751.6 1006.9 1758.6 1006.9 L1766.9 1006.9 L1766.9 999.9 Z M1760.6 1019.8 L1766.9 1017.6 L1766.9 1036 L1760.6 1033.8 Z" fill-rule="evenodd"/>
</defs>
<g filter="url(#sh)"><use href="#lg" fill="#fff" fill-opacity="0.55" stroke="#fff" stroke-opacity="0.9" stroke-width="1.8" stroke-linejoin="round"/></g>
<use href="#lg" fill="#e0463c" fill-opacity="0.23"/>
<g filter="url(#sh)" fill="#f8f8f8">
<text transform="translate(1795.5 1031) skewX(-9) scale(0.643 1)" x="0" y="0" font-family="'Noto Sans CJK SC','WenQuanYi Zen Hei',sans-serif" font-weight="700" font-size="32.5">科创研究院</text>
<text x="1799" y="1048.6" font-family="'DejaVu Sans','Liberation Sans',sans-serif" font-weight="bold" font-style="italic" font-size="15.5" textLength="97.5" lengthAdjust="spacingAndGlyphs">kechuang.org</text>
</g>
</svg>
</body>
</html>
